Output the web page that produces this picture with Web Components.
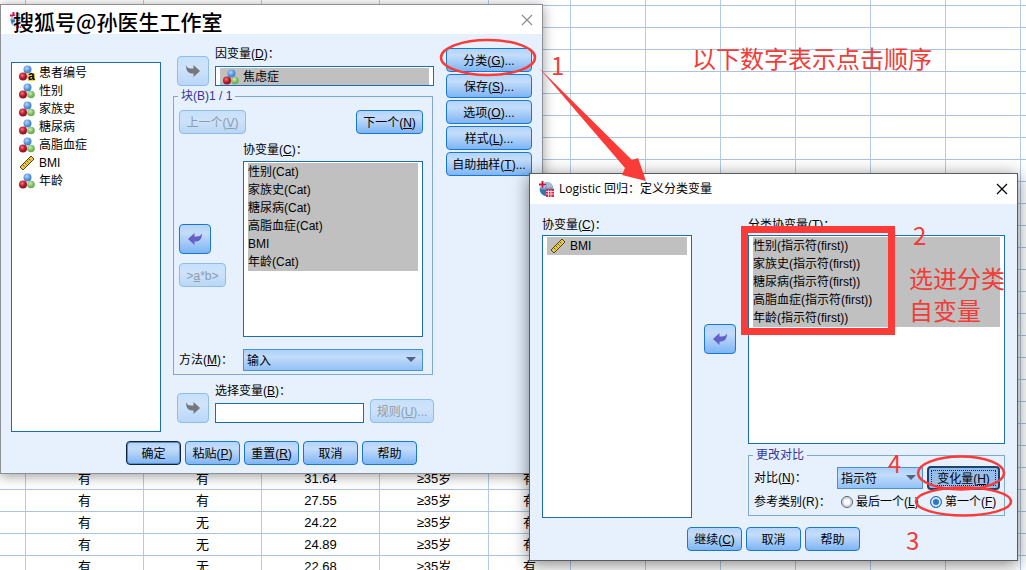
<!DOCTYPE html>
<html lang="zh-CN">
<head>
<meta charset="utf-8">
<title>Logistic 回归</title>
<style>
  html, body { margin: 0; height: 100%; }
  body {
    position: relative;
    overflow: hidden;
    background: #fff;
    color: #000;
    font: 12px/16px "Liberation Sans", "Noto Sans CJK SC", sans-serif;
  }
</style>
</head>
<body>
<data-sheet></data-sheet>
<main-dialog></main-dialog>
<contrast-dialog></contrast-dialog>
<note-layer></note-layer>

<script>
const define = (name, html, setup) => {
  const template = document.createElement('template');
  template.innerHTML = '<style>*{box-sizing:border-box}[hidden]{display:none!important}</style>' + html;
  customElements.define(name, class extends HTMLElement {
    constructor() {
      super();
      this.attachShadow({ mode: 'open' }).append(template.content.cloneNode(true));
    }
    connectedCallback() {
      if (setup && !this.ready) { this.ready = true; setup(this, this.shadowRoot); }
    }
  });
};

/* Spreadsheet behind the dialogs */
define('data-sheet', `
<style>
  :host { display: block; width: 100%; height: 100%; overflow: hidden; }
  table { width: 1101px; margin-top: -16px; border-collapse: separate; border-spacing: 0; table-layout: fixed; }
  td { height: 22px; padding: 0; border-right: 1px solid #b3cbe6; border-bottom: 1px solid #a9c3e0;
       text-align: center; font-size: 13px; line-height: 20px; white-space: nowrap; }
</style>
<table aria-label="数据"><colgroup></colgroup><tbody></tbody></table>`, (host, root) => {
  const widths = [26, 118, 118, 118, 109, 82, 75, 75, 75, 75, 75, 75, 80];
  const rows = {
    22: ['有', '有', '31.64'], 23: ['有', '有', '27.55'], 24: ['有', '无', '24.22'],
    25: ['有', '无', '24.89'], 26: ['有', '无', '22.68']
  };
  root.querySelector('colgroup').innerHTML = widths.map(w => `<col style="width:${w}px">`).join('');
  let html = '';
  for (let r = 0; r < 28; r++) {
    const data = rows[r] ? ['', ...rows[r], '≥35岁', '有'] : [];
    html += '<tr>' + widths.map((w, c) => `<td>${data[c] || ''}</td>`).join('') + '</tr>';
  }
  root.querySelector('tbody').innerHTML = html;
});

/* Dialog frame with title bar */
define('spss-window', `
<style>
  :host { display: block; box-sizing: border-box; border: 1px solid #8d9196; background: #e6f1fd;
          box-shadow: 0 2px 12px rgba(0,0,0,.4); }
  :host([active]) { border-color: #585c60; box-shadow: 0 3px 16px rgba(0,0,0,.5); }
  header { display: flex; align-items: center; height: 29px; padding: 0 8px; background: #fff; gap: 5px; }
  :host([active]) header { height: 30px; }
  h1 { flex: 1; margin: 0; font: 12px/16px "Open Sans", "Noto Sans CJK SC", sans-serif; white-space: nowrap; }
  button { display: flex; width: 14px; height: 14px; padding: 1px; border: 0; background: none; color: #8c8c8c; }
  :host([active]) button { color: #000; }
  .body { display: flex; flex-direction: column; }
</style>
<header>
  <svg width="16" height="16" viewBox="0 0 16 16" aria-hidden="true">
    <circle cx="8.5" cy="8" r="7" fill="#6ba0cb"/>
    <path d="M8 1a7 7 0 0 1 7 5L9 7z" fill="#a9bdd0"/>
    <path d="M2 8a7 7 0 0 0 6 7V9z" fill="#2f75b0"/>
    <path d="M4.500 0v7M1 3.500h7" stroke="#fff" stroke-width="3.500"/>
    <path d="M4.500 0v7M1 3.500h7" stroke="#ce1740" stroke-width="2"/>
    <path d="M8 8h8v8H8z" fill="#d62b50"/>
    <path d="M8 10.500h8M8 13h8M10.500 9v7M13 9v7" stroke="#fff" stroke-width=".7"/>
  </svg>
  <h1><slot name="title"></slot></h1>
  <button aria-label="关闭"><svg width="12" height="12" viewBox="0 0 12 12"><path d="M1 1l10 10M11 1L1 11" stroke="currentColor" stroke-width="1.200"/></svg></button>
</header>
<div class="body"><slot></slot></div>`);

/* Push button; "arrow" gives the square transfer button */
define('spss-button', `
<style>
  :host { display: block; width: 55px; height: 24px; flex: none; }
  :host([arrow]) { width: 32px; height: 30px; }
  button { display: flex; align-items: center; justify-content: center; width: 100%; height: 100%; padding: 2px 0 0;
    border: 1px solid #1a78cc; border-radius: 4px; color: #000; font: inherit; white-space: nowrap;
    background: linear-gradient(#b4d4f9, #c3dcfa 30%, #9dc6f7 70%, #7db5f5); }
  :host([primary]) button { border-color: #10233c; box-shadow: inset 0 0 0 1px #5b8ec4; }
  :host([focused]) button { border: 2px solid #1c4270; background: #97bdeb; outline: 1px dotted #10233c; outline-offset: -5px; }
  :host([disabled]) button { border-color: #8fbde8; color: #8d9baa; background: linear-gradient(#c6e0fb, #cfe3fa 40%, #b8d7f8); }
  :host([arrow]) button { padding: 0; color: #6460c8; }
  :host([arrow][disabled]) button { color: #75777c; }
</style>
<button><slot></slot><svg hidden width="16" height="14" viewBox="0 0 16 14" aria-hidden="true"><path d="M1 1C2 4 4 4.500 8.500 4.500V1L15 7l-6.500 6V9.500C4 9.500 1 8 1 1z" fill="currentColor"/></svg></button>`, (host, root) => {
  const button = root.querySelector('button');
  button.disabled = host.hasAttribute('disabled');
  const arrow = host.getAttribute('arrow');
  if (arrow) {
    const svg = root.querySelector('svg');
    svg.removeAttribute('hidden');
    if (arrow === 'left') svg.style.transform = 'scaleX(-1)';
    button.setAttribute('aria-label', arrow === 'left' ? '移出' : '移入');
  }
});

/* Variable type marker: nominal, string (nominal + a), scale */
define('var-icon', `
<style>
  :host { display: inline-block; width: 17px; height: 16px; flex: none; }
  svg { display: block; overflow: visible; }
  text { font: bold 12px "Liberation Sans", sans-serif; }
</style>
<svg width="17" height="16" viewBox="0 0 17 16" aria-hidden="true">
  <defs>
    <radialGradient id="b" cx=".4" cy=".35"><stop offset="0" stop-color="#b5d5fb"/><stop offset="1" stop-color="#4a86d0"/></radialGradient>
    <radialGradient id="r" cx=".4" cy=".35"><stop offset="0" stop-color="#f08080"/><stop offset=".6" stop-color="#c8283a"/><stop offset="1" stop-color="#971626"/></radialGradient>
    <radialGradient id="g" cx=".4" cy=".35"><stop offset="0" stop-color="#c9f0b0"/><stop offset="1" stop-color="#6fae55"/></radialGradient>
  </defs>
  <g class="nominal">
    <circle cx="8.500" cy="4.500" r="4" fill="url(#b)"/>
    <circle cx="4" cy="11.500" r="4" fill="url(#r)"/>
    <circle cx="12" cy="11.500" r="3.800" fill="url(#g)"/>
  </g>
  <g class="string"><path d="M9 8h7v8H9z" fill="#f4cf4a"/><text x="9" y="15">a</text></g>
  <g class="scale">
    <path d="M1 12L12 1l3 3L4 15z" fill="#ecc63c" stroke="#4e4520" stroke-width="1"/>
    <path d="M4 10l1.500 1.500M6 8l1.500 1.500M8 6l1.500 1.500M10 4l1.500 1.500" stroke="#4e4520" stroke-width=".8"/>
  </g>
</svg>`, (host, root) => {
  const type = host.getAttribute('type');
  root.querySelector('.nominal').style.display = type === 'scale' ? 'none' : '';
  root.querySelector('.string').style.display = type === 'string' ? '' : 'none';
  root.querySelector('.scale').style.display = type === 'scale' ? '' : 'none';
});

/* Variable list: items="type:name|type:name" */
define('var-list', `
<style>
  :host { display: flex; box-sizing: border-box; border: 1px solid #1d6cae; background: #fff; overflow: hidden; }
  ul { flex: 1; min-width: 0; margin: 0; padding: 1px 4px; list-style: none; }
  li { display: flex; align-items: center; gap: 3px; height: 18px; padding-left: 3px; white-space: nowrap; }
  li.plain { padding-left: 0; }
  li[aria-selected="true"] { background: #c0c0c0; }
</style>
<ul role="listbox"></ul>`, (host, root) => {
  const selected = host.hasAttribute('selected');
  const list = root.querySelector('ul');
  list.setAttribute('aria-label', host.getAttribute('label'));
  list.innerHTML = host.getAttribute('items').split('|').map(item => {
    const [type, name] = item.split(':');
    const icon = type ? `<var-icon type="${type}"></var-icon>` : '';
    return `<li role="option" aria-selected="${selected}" class="${type ? '' : 'plain'}">${icon}<span>${name}</span></li>`;
  }).join('');
});

/* Titled frame */
define('group-box', `
<style>
  :host { display: block; }
  fieldset { margin: 0; padding: 0; border: 1px solid #7fa9d0; min-width: 0; }
  legend { margin-left: 4px; padding: 0 3px; height: 16px; color: #34349c; }
</style>
<fieldset><legend><slot name="legend"></slot></legend><slot></slot></fieldset>`);

const selectStyle = `
  .drop { position: relative; display: block; }
  select { display: block; width: 100%; height: 22px; padding: 1px 3px 0; border: 1px solid #4a90d4; border-radius: 0;
    appearance: none; color: #000; font: inherit; background: linear-gradient(#abd0f9, #c3dcfb 35%, #92c1f6); }
  .drop::after { content: ""; position: absolute; right: 7px; top: 8px; border: 5px solid transparent;
    border-top-color: #51637e; border-bottom: 0; pointer-events: none; }`;

define('main-dialog', `
<style>
  :host { position: absolute; left: 0; top: 4px; width: 543px; }
  .columns { display: grid; grid-template-columns: 150px 1fr 86px; column-gap: 12px; padding: 12px 10px 0; }
  .source { margin-top: 16px; }
  .middle { padding-bottom: 9px; min-width: 0; }
  .target { display: flex; align-items: flex-end; gap: 6px; padding-left: 4px; }
  .field { display: grid; gap: 4px; width: 219px; }
  .lower { margin-top: 8px; }
  .lower .field { width: 150px; }
  var-list.single { height: 20px; }
  input { display: block; width: 100%; height: 20px; padding: 0 4px; border: 1px solid #1d6cae; background: #fff; font: inherit; }
  group-box { width: 260px; margin-top: 2px; }
  .block { display: grid; grid-template-columns: 64px 180px; padding: 6px 0 3px 5px; }
  .pager { grid-column: 1 / 3; display: flex; justify-content: space-between; }
  .pager spss-button { width: 67px; }
  .moves { display: grid; align-content: start; gap: 9px; padding-top: 90px; }
  .moves spss-button:last-child { width: 47px; }
  .covariates { display: grid; gap: 3px; padding: 8px 0 12px; }
  .covariates var-list { height: 176px; }
  .method { align-self: center; }
  .side { display: grid; gap: 2px; align-content: start; padding-top: 2px; }
  .side spss-button { width: 86px; }
  .rules { width: 64px; }
  footer { display: flex; justify-content: center; gap: 4px; padding: 9px 0 8px; }
  ${selectStyle}
</style>
<spss-window>
  <div class="columns">
    <var-list class="source" label="变量" items="string:患者编号|nominal:性别|nominal:家族史|nominal:糖尿病|nominal:高脂血症|scale:BMI|nominal:年龄"></var-list>
    <div class="middle">
      <div class="target">
        <spss-button arrow="right" disabled></spss-button>
        <div class="field"><span>因变量(<u>D</u>)：</span>
          <var-list class="single" selected label="因变量" items="nominal:焦虑症"></var-list></div>
      </div>
      <group-box><span slot="legend">块(B)1 / 1</span>
        <div class="block">
          <div class="pager"><spss-button disabled>上一个(<u>V</u>)</spss-button><spss-button>下一个(<u>N</u>)</spss-button></div>
          <div class="moves"><spss-button arrow="left"></spss-button><spss-button disabled>&gt;<u>a</u>*b&gt;</spss-button></div>
          <div class="covariates"><span>协变量(<u>C</u>)：</span>
            <var-list selected label="协变量" items=":性别(Cat)|:家族史(Cat)|:糖尿病(Cat)|:高脂血症(Cat)|:BMI|:年龄(Cat)"></var-list></div>
          <label class="method" for="method">方法(<u>M</u>)：</label>
          <span class="drop"><select id="method"><option>输入</option></select></span>
        </div>
      </group-box>
      <div class="target lower">
        <spss-button arrow="right" disabled></spss-button>
        <div class="field"><label for="pick">选择变量(<u>B</u>)：</label><input id="pick"></div>
        <spss-button class="rules" disabled>规则(<u>U</u>)...</spss-button>
      </div>
    </div>
    <div class="side">
      <spss-button>分类(<u>G</u>)...</spss-button>
      <spss-button>保存(<u>S</u>)...</spss-button>
      <spss-button>选项(<u>O</u>)...</spss-button>
      <spss-button>样式(<u>L</u>)...</spss-button>
      <spss-button>自助抽样(<u>T</u>)...</spss-button>
    </div>
  </div>
  <footer>
    <spss-button primary>确定</spss-button>
    <spss-button>粘贴(<u>P</u>)</spss-button>
    <spss-button>重置(<u>R</u>)</spss-button>
    <spss-button>取消</spss-button>
    <spss-button>帮助</spss-button>
  </footer>
</spss-window>`);

define('contrast-dialog', `
<style>
  :host { position: absolute; left: 529px; top: 173px; width: 489px; }
  .columns { display: grid; grid-template-columns: 150px 32px 1fr; column-gap: 12px; padding: 13px 12px 0; }
  .stack { display: grid; grid-template-rows: 16px 1fr; gap: 2px; min-width: 0; }
  .left { padding-bottom: 0; }
  spss-button[arrow] { margin-top: 107px; }
  .right { padding-bottom: 2px; min-width: 0; }
  .right var-list { height: 209px; }
  group-box { margin-top: 3px; }
  .row { display: grid; grid-template-columns: 83px 1fr 73px; align-items: center; padding: 3px 4px 0 5px; }
  .row .drop { margin-right: 4px; }
  .row spss-button { width: 73px; }
  .choices { display: flex; align-items: center; padding: 4px 0 5px 5px; }
  .choices > span { flex: none; width: 87px; }
  .choices label { display: flex; flex: none; align-items: center; gap: 3px; white-space: nowrap; }
  .choices label.last { width: 79px; margin-right: 10px; overflow: hidden; }
  input { flex: none; width: 12px; height: 12px; margin: 0; appearance: none; border: 1px solid #56606c; border-radius: 50%;
    background: #fff; box-shadow: inset 0 0 0 2px #d3dbe4; }
  input:checked { border-color: #2a6cab; background: #2c78c8; box-shadow: inset 0 0 0 2px #d9e8f8; }
  footer { display: flex; justify-content: center; gap: 4px; padding: 9px 0; }
  ${selectStyle}
</style>
<spss-window active><span slot="title">Logistic 回归：定义分类变量</span>
  <div class="columns">
    <div class="stack left"><span>协变量(<u>C</u>)：</span>
      <var-list selected label="协变量" items="scale:BMI"></var-list></div>
    <spss-button arrow="left"></spss-button>
    <div class="right">
      <div class="stack"><span>分类协变量(<u>T</u>)：</span>
        <var-list selected label="分类协变量" items=":性别(指示符(first))|:家族史(指示符(first))|:糖尿病(指示符(first))|:高脂血症(指示符(first))|:年龄(指示符(first))"></var-list></div>
      <group-box><span slot="legend">更改对比</span>
        <div class="row"><label for="contrast">对比(<u>N</u>)：</label>
          <span class="drop"><select id="contrast"><option>指示符</option></select></span>
          <spss-button focused>变化量(<u>H</u>)</spss-button></div>
        <div class="choices" role="radiogroup" aria-label="参考类别"><span>参考类别(R)：</span>
          <label class="last"><input type="radio" name="ref"><span>最后一个(<u>L</u>)</span></label>
          <label><input type="radio" name="ref" checked><span>第一个(<u>F</u>)</span></label></div>
      </group-box>
    </div>
  </div>
  <footer>
    <spss-button>继续(<u>C</u>)</spss-button>
    <spss-button>取消</spss-button>
    <spss-button>帮助</spss-button>
  </footer>
</spss-window>`);

/* Red teaching marks and the author's signature, drawn over the windows */
define('note-layer', `
<style>
  :host { position: absolute; inset: 0; pointer-events: none; color: #f13c38;
          font: 24px/32px "Noto Sans CJK SC", sans-serif; }
  svg, p { position: absolute; margin: 0; white-space: nowrap; }
  svg { left: 0; top: 0; }
  .sign { left: 13px; top: 5px; color: #000; font-size: 21px; font-weight: 500; text-shadow: -1px -1px 0 #fff, -1px 0 0 #fff; }
</style>
<svg width="1026" height="570" viewBox="0 0 1026 570" fill="none" stroke="#fb3b38" aria-hidden="true">
  <ellipse cx="488" cy="57.500" rx="47" ry="17.500" stroke-width="2.500"/>
  <ellipse cx="961" cy="473" rx="43" ry="16.500" stroke-width="2.500"/>
  <ellipse cx="963.500" cy="501.500" rx="47.500" ry="14" stroke-width="2.500"/>
  <rect x="744.500" y="229.500" width="147" height="102" stroke-width="7"/>
  <path d="M539 68L632 160l6-2 8 23-24-6 3-7z" fill="#fb3b38" stroke="none"/>
</svg>
<p class="sign">搜狐号@孙医生工作室</p>
<p style="left:692px;top:42px">以下数字表示点击顺序</p>
<p style="left:551px;top:49px">1</p>
<p style="left:913px;top:219px">2</p>
<p style="left:909px;top:262px">选进分类<br>自变量</p>
<p style="left:888px;top:447px">4</p>
<p style="left:906px;top:524px">3</p>`);
</script>
</body>
</html>
